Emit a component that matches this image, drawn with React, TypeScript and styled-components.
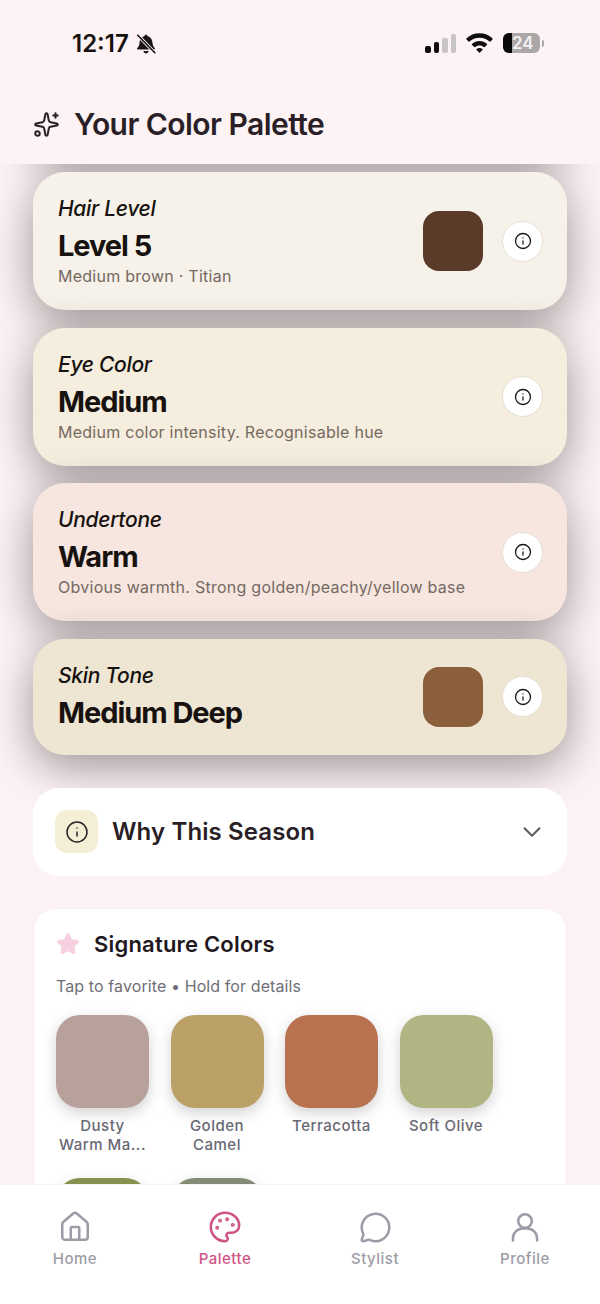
import React from 'react';
import styled, { createGlobalStyle } from 'styled-components';
import { ChevronDown, House, Info, MessageCircle, Palette, Sparkles, Star } from 'lucide-react';

const analysis = [
  { label: 'Hair Level', value: 'Level 5', note: 'Medium brown · Titian', bg: '#f6f1e9', swatch: '#5a3a28' },
  { label: 'Eye Color', value: 'Medium', note: 'Medium color intensity. Recognisable hue', bg: '#f5eddd' },
  { label: 'Undertone', value: 'Warm', note: 'Obvious warmth. Strong golden/peachy/yellow base', bg: '#f6e6df' },
  { label: 'Skin Tone', value: 'Medium Deep', bg: '#eee6d3', swatch: '#8b5e3c' },
];

const signature = [
  { name: 'Dusty Warm Ma...', color: '#b8a19b' },
  { name: 'Golden Camel', color: '#bba068' },
  { name: 'Terracotta', color: '#b9724f' },
  { name: 'Soft Olive', color: '#b0b583' },
  { color: '#87914f' },
  { color: '#848c78' },
];

const ProfileIcon = ({ size, strokeWidth }: { size: number; strokeWidth: number }) => (
  <svg width={size} height={size} viewBox="0 0 24 24" fill="none" stroke="currentColor" strokeWidth={strokeWidth} strokeLinecap="round">
    <circle cx="12" cy="7.800" r="4.800" />
    <path d="M3.500 21.500v-1.500a7 7 0 0 1 7-7h3a7 7 0 0 1 7 7v1.500" />
  </svg>
);

const tabs = [
  { name: 'Home', Icon: House, size: 34 },
  { name: 'Palette', Icon: Palette, active: true, size: 34 },
  { name: 'Stylist', Icon: MessageCircle, size: 33 },
  { name: 'Profile', Icon: ProfileIcon, size: 34 },
];

export default function App() {
  return (
    <Screen>
      <GlobalStyle />
      <TopBar>
        <StatusBar>
          <Clock>
            12:17
            <svg width="24" height="24" viewBox="0 0 22 22">
              <path d="M11 2.500c.9 0 1.500.6 1.600 1.400 2.700.7 4 2.900 4.300 5.700.2 2.200.7 3.700 2.100 5.100.5.6.2 1.300-.6 1.300H3.600c-.8 0-1.100-.7-.6-1.300 1.400-1.400 1.900-2.900 2.100-5.100.3-2.800 1.600-5 4.300-5.700.1-.8.7-1.400 1.600-1.400z" fill="#1a1516" />
              <path d="M8.600 17.500h4.800c-.2 1.300-1.200 2.100-2.400 2.100s-2.200-.8-2.400-2.100z" fill="#1a1516" />
              <path d="M3 2.500 19.500 19.500" stroke="#fdf2f4" strokeWidth="3" />
              <path d="M3 2.500 19.500 19.500" stroke="#1a1516" strokeWidth="1.500" />
            </svg>
          </Clock>
          <StatusIcons>
            <Signal>
              <SignalBar $height={7} />
              <SignalBar $height={11} />
              <SignalBar $height={15} $dim />
              <SignalBar $height={19} $dim />
            </Signal>
            <svg width="27" height="20" viewBox="3.300 3.300 21.400 15.400">
              <path d="M14 3.300c4 0 7.600 1.500 10.400 4.100.2.200.2.500 0 .7l-1.700 1.800c-.2.200-.5.200-.7 0C19.900 8 17.100 6.900 14 6.900S8.100 8 6 9.900c-.2.200-.5.200-.7 0L3.600 8.100c-.2-.2-.2-.5 0-.7C6.400 4.800 10 3.300 14 3.300z" fill="#0f0c0d" />
              <path d="M14 9.400c2.300 0 4.400.8 6 2.300.2.200.2.500 0 .7l-1.800 1.800c-.2.200-.5.200-.7 0-1-.8-2.200-1.300-3.500-1.300s-2.500.5-3.500 1.300c-.2.200-.5.200-.7 0L8 12.400c-.2-.2-.2-.5 0-.7 1.600-1.500 3.700-2.300 6-2.300z" fill="#0f0c0d" />
              <path d="M14 15c.9 0 1.700.3 2.300.8.200.2.200.5 0 .7L14.400 18.500c-.2.200-.6.200-.8 0l-1.900-2c-.2-.2-.2-.5 0-.7.600-.5 1.400-.8 2.300-.8z" fill="#0f0c0d" />
            </svg>
            <Battery>
              <BatteryBody>
                <BatteryFill />
                <BatteryLevel>24</BatteryLevel>
              </BatteryBody>
              <BatteryCap />
            </Battery>
          </StatusIcons>
        </StatusBar>
        <PageHeader>
          <Sparkles size={27} strokeWidth={1.8} color="#2a1f26" />
          <PageTitle>Your Color Palette</PageTitle>
        </PageHeader>
      </TopBar>

      <Content>
        <AnalysisList>
          {/* scrolled up behind the header, only its shadow still shows */}
          <ScrolledCard />
          {analysis.map((item) => (
            <AnalysisCard key={item.label} $bg={item.bg}>
              <AnalysisText>
                <AnalysisLabel>{item.label}</AnalysisLabel>
                <AnalysisValue>{item.value}</AnalysisValue>
                {item.note && <AnalysisNote>{item.note}</AnalysisNote>}
              </AnalysisText>
              {item.swatch && <AnalysisSwatch $color={item.swatch} />}
              <InfoButton>
                <Info size={18} strokeWidth={1.7} color="#1c1517" />
              </InfoButton>
            </AnalysisCard>
          ))}
        </AnalysisList>

        <WhyCard>
          <WhyIcon>
            <Info size={24} strokeWidth={1.5} color="#2a1f26" />
          </WhyIcon>
          <WhyTitle>Why This Season</WhyTitle>
          <ChevronDown size={30} strokeWidth={1.6} color="#5f5a62" />
        </WhyCard>

        <SignatureCard>
          <SignatureHeader>
            <Star size={24} fill="#f6cfe0" color="#f6cfe0" />
            <SignatureTitle>Signature Colors</SignatureTitle>
          </SignatureHeader>
          <SignatureHint>Tap to favorite • Hold for details</SignatureHint>
          <SwatchGrid>
            {signature.map((color) => (
              <SwatchItem key={color.color}>
                <Swatch $color={color.color} />
                {color.name && <SwatchName>{color.name}</SwatchName>}
              </SwatchItem>
            ))}
          </SwatchGrid>
        </SignatureCard>
      </Content>

      <BottomNav>
        {tabs.map(({ name, Icon, active, size }) => (
          <Tab key={name} $active={active}>
            <TabIcon>
              <Icon size={size} strokeWidth={1.8} />
            </TabIcon>
            <TabLabel>{name}</TabLabel>
          </Tab>
        ))}
      </BottomNav>
    </Screen>
  );
}

const GlobalStyle = createGlobalStyle`
  html, body {
    margin: 0;
    padding: 0;
    background: #fdf2f4;
  }
  * {
    box-sizing: border-box;
  }
`;

const Screen = styled.div`
  width: 600px;
  height: 1304px;
  display: flex;
  flex-direction: column;
  overflow: hidden;
  background: #fdf2f4;
  font-family: Inter, 'Liberation Sans', sans-serif;
`;

const TopBar = styled.header`
  position: relative;
  z-index: 2;
  flex: none;
  height: 164px;
  background: #fdf2f4;
`;

const StatusBar = styled.div`
  height: 85px;
  padding: 28px 56px 0 72px;
  display: flex;
  justify-content: space-between;
  align-items: flex-start;
`;

const Clock = styled.div`
  display: flex;
  align-items: center;
  gap: 5px;
  font-size: 24px;
  line-height: 32px;
  font-weight: 600;
  color: #17120f;
`;

const StatusIcons = styled.div`
  display: flex;
  align-items: center;
  height: 30px;
  gap: 10px;
`;

const Signal = styled.div`
  display: flex;
  align-items: flex-end;
  gap: 3px;
  height: 19px;
`;

const SignalBar = styled.span<{ $height: number; $dim?: boolean }>`
  width: 5.500px;
  height: ${(props) => props.$height}px;
  border-radius: 2px;
  background: ${(props) => (props.$dim ? '#c9c4c6' : '#0f0c0d')};
`;

const Battery = styled.div`
  display: flex;
  align-items: center;
  gap: 2px;
`;

const BatteryBody = styled.div`
  position: relative;
  width: 37px;
  height: 20px;
  border-radius: 6px;
  overflow: hidden;
  background: #aba6a7;
`;

const BatteryFill = styled.span`
  position: absolute;
  left: 0;
  top: 0;
  bottom: 0;
  width: 9px;
  background: #0a0809;
`;

const BatteryLevel = styled.span`
  position: absolute;
  left: 9px;
  top: 0;
  font-size: 17px;
  line-height: 20px;
  font-weight: 600;
  color: #f5f1f2;
`;

const BatteryCap = styled.span`
  width: 2px;
  height: 7px;
  border-radius: 0 2px 2px 0;
  background: #aba6a7;
`;

const PageHeader = styled.div`
  display: flex;
  align-items: center;
  gap: 14px;
  padding: 21px 33px 0;
`;

const PageTitle = styled.h1`
  margin: 0;
  font-size: 30px;
  line-height: 36px;
  font-weight: 600;
  letter-spacing: -0.550px;
  color: #2a1f26;
`;

const Content = styled.main`
  flex: 1;
  min-height: 0;
  overflow: hidden;
  padding: 8px 33px 0;
  display: flex;
  flex-direction: column;
`;

const AnalysisList = styled.section`
  flex: none;
  display: flex;
  flex-direction: column;
  gap: 17.670px;
  margin-top: -117.670px;
  margin-bottom: 33px;
`;

const AnalysisCard = styled.div<{ $bg: string }>`
  display: flex;
  align-items: center;
  gap: 19px;
  padding: 22px 24px 22px 25px;
  border-radius: 32px;
  background: ${(props) => props.$bg};
  box-shadow: 0 12px 46px rgba(10, 5, 5, 0.4);
`;

const ScrolledCard = styled.div`
  flex: none;
  height: 100px;
  border-radius: 32px;
  box-shadow: 0 12px 46px rgba(10, 5, 5, 0.4);
`;

const AnalysisText = styled.div`
  flex: 1;
  min-width: 0;
  margin-top: -1px;
`;

const AnalysisLabel = styled.div`
  font-size: 21px;
  line-height: 32px;
  font-style: italic;
  font-weight: 500;
  letter-spacing: -0.300px;
  color: #17120f;
`;

const AnalysisValue = styled.div`
  margin-top: 1px;
  font-size: 29px;
  line-height: 40px;
  font-weight: 700;
  letter-spacing: -1.050px;
  color: #17120f;
`;

const AnalysisNote = styled.div`
  margin-top: -1px;
  font-size: 16px;
  line-height: 23px;
  letter-spacing: 0.260px;
  color: #75695f;
`;

const AnalysisSwatch = styled.div<{ $color: string }>`
  flex: none;
  width: 60px;
  height: 60px;
  border-radius: 16px;
  background: ${(props) => props.$color};
`;

const InfoButton = styled.div`
  flex: none;
  width: 41px;
  height: 41px;
  display: flex;
  align-items: center;
  justify-content: center;
  border-radius: 50%;
  background: #fff;
  border: 1px solid #e6dfd2;
`;

const WhyCard = styled.section`
  flex: none;
  height: 88px;
  display: flex;
  align-items: center;
  gap: 14px;
  padding: 0 20px 0 22px;
  border-radius: 26px;
  background: #fff;
  margin-bottom: 32.500px;
`;

const WhyIcon = styled.div`
  flex: none;
  width: 43px;
  height: 43px;
  display: flex;
  align-items: center;
  justify-content: center;
  border-radius: 12px;
  background: #f5eed6;
`;

const WhyTitle = styled.h2`
  flex: 1;
  margin: 0;
  font-size: 24px;
  font-weight: 600;
  letter-spacing: 0.120px;
  color: #2a1f26;
`;

const SignatureCard = styled.section`
  flex: none;
  padding: 20px 22px;
  border-radius: 22px;
  background: #fff;
  border: 1px solid #f7eef0;
`;

const SignatureHeader = styled.div`
  display: flex;
  align-items: center;
  gap: 14px;
`;

const SignatureTitle = styled.h3`
  margin: 0;
  font-size: 22px;
  line-height: 30px;
  font-weight: 600;
  letter-spacing: 0.200px;
  color: #1f1820;
`;

const SignatureHint = styled.p`
  margin: 15px 0 17px;
  font-size: 16px;
  line-height: 24px;
  letter-spacing: 0.100px;
  color: #6f6e78;
`;

const SwatchGrid = styled.div`
  display: flex;
  flex-wrap: wrap;
  gap: 24px 22px;
`;

const SwatchItem = styled.div`
  width: 93px;
  margin-right: -0.500px;
  text-align: center;
`;

const Swatch = styled.div<{ $color: string }>`
  width: 93px;
  height: 93px;
  border-radius: 24px;
  background: ${(props) => props.$color};
  box-shadow: 0 5px 14px rgba(60, 50, 55, 0.22);
`;

const SwatchName = styled.div`
  margin-top: 8px;
  font-size: 15px;
  line-height: 19px;
  font-weight: 500;
  letter-spacing: 0.500px;
  color: #696873;
`;

const BottomNav = styled.nav`
  position: relative;
  z-index: 2;
  flex: none;
  height: 120px;
  display: grid;
  grid-template-columns: repeat(4, 150px);
  background: #fff;
  padding-top: 25px;
  border-top: 1px solid #f5f3f3;
`;

const Tab = styled.div<{ $active?: boolean }>`
  display: flex;
  flex-direction: column;
  align-items: center;
  color: ${(props) => (props.$active ? '#cf5486' : '#9d9ca6')};
`;

const TabIcon = styled.div`
  height: 34px;
  display: flex;
  align-items: center;
  justify-content: center;
`;

const TabLabel = styled.span`
  margin-top: 5px;
  font-size: 15px;
  line-height: 20px;
  font-weight: 500;
  letter-spacing: 0.500px;
`;
